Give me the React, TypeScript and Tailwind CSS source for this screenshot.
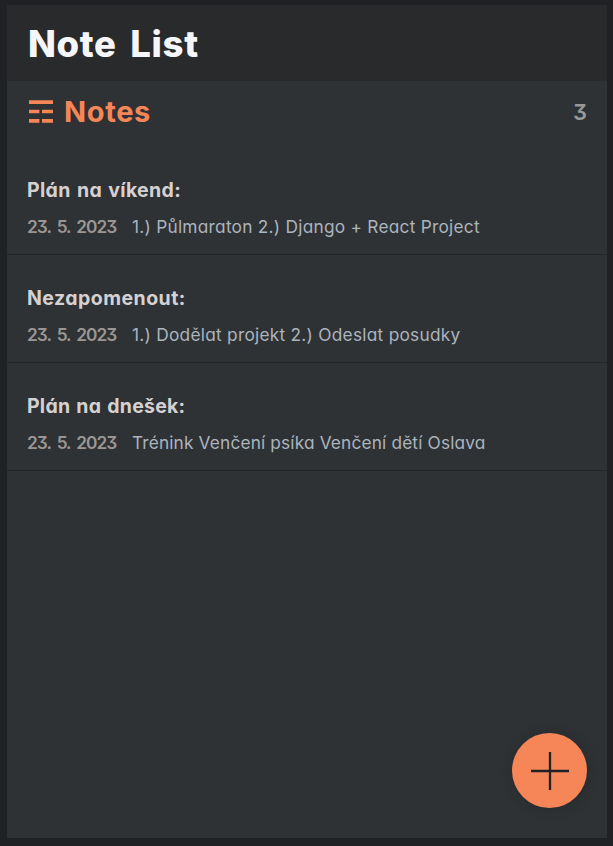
type Note = {
  title: string;
  titleTracking: string;
  body: string;
  bodyTracking: string;
};

const notes: Note[] = [
  { title: 'Plán na víkend:', titleTracking: 'tracking-[0.35px] [word-spacing:1.2px]', body: '1.) Půlmaraton 2.) Django + React Project', bodyTracking: 'tracking-[0.25px]' },
  { title: 'Nezapomenout:', titleTracking: 'tracking-[0.47px]', body: '1.) Dodělat projekt 2.) Odeslat posudky', bodyTracking: 'tracking-[0.26px]' },
  { title: 'Plán na dnešek:', titleTracking: 'tracking-[0.23px] [word-spacing:1.2px]', body: 'Trénink Venčení psíka Venčení dětí Oslava', bodyTracking: 'tracking-[0.15px]' },
];

function NotesIcon() {
  return (
    <svg className="block h-6 w-6 shrink-0" viewBox="0 0 24 24" fill="#f68657" aria-hidden="true">
      <path d="M0 0.3h24v3.7H0zM0 9.7h10.4v3.6H0zM13 9.7h11v3.6H13zM0 19h10.4v3.7H0zM13 19h11v3.7H13z" />
    </svg>
  );
}

function NoteRow({ note }: { note: Note }) {
  return (
    <li className="flex h-[108px] flex-col border-b border-[#232529] px-5 pt-[31px]">
      <h3 className={`h-6 text-[19.5px] leading-6 font-bold whitespace-nowrap text-[#d6d1d1] ${note.titleTracking}`}>
        {note.title}
      </h3>
      <div className="mt-[13px] flex h-6 text-[17.3px] leading-6 whitespace-nowrap">
        <span className="w-[105px] shrink-0 font-semibold tracking-[-0.95px] text-[#9b9693] [word-spacing:2.5px]">
          23. 5. 2023
        </span>
        <p className={`text-[#acb4bd] ${note.bodyTracking}`}>{note.body}</p>
      </div>
    </li>
  );
}

export default function App() {
  return (
    <div className="h-[846px] w-[613px] overflow-hidden bg-[#1f2124] pt-[5px] pl-[7px] font-[Inter,sans-serif] [font-feature-settings:'cv11','cv09']">
      <main className="flex h-[833px] w-[600px] flex-col bg-[#2e3235]">
        <header className="flex h-[76px] items-center bg-[#292a2b] px-5 pt-[2px]">
          <h1 className="pl-px text-[36.5px] leading-none font-extrabold tracking-[0.65px] whitespace-nowrap text-[#f5f6f9] [word-spacing:5px]">
            Note List
          </h1>
        </header>
        <div className="flex h-[61px] items-center justify-between px-5">
          <h2 className="flex items-center gap-[11px] pl-[2px] text-[29px] leading-none font-bold tracking-[0.65px] text-[#f68657]">
            <NotesIcon />
            Notes
          </h2>
          <span className="pt-px text-[22px] leading-none font-semibold text-[#999999]">3</span>
        </div>
        <ul className="flex-1 pt-[5px]">
          {notes.map((note) => (
            <NoteRow key={note.title} note={note} />
          ))}
        </ul>
        <div className="flex justify-end pr-5 pb-[30px]">
          <button
            aria-label="Add note"
            className="flex h-[75px] w-[75px] items-center justify-center rounded-full bg-[#f68657] shadow-[1px_1px_10px_rgba(32,33,36,0.5)]"
          >
            <svg className="h-[38px] w-[38px]" viewBox="0 0 38 38" fill="none" stroke="#1f2124" strokeWidth="2.3" aria-hidden="true">
              <path d="M19 0v38M0 19h38" />
            </svg>
          </button>
        </div>
      </main>
    </div>
  );
}
